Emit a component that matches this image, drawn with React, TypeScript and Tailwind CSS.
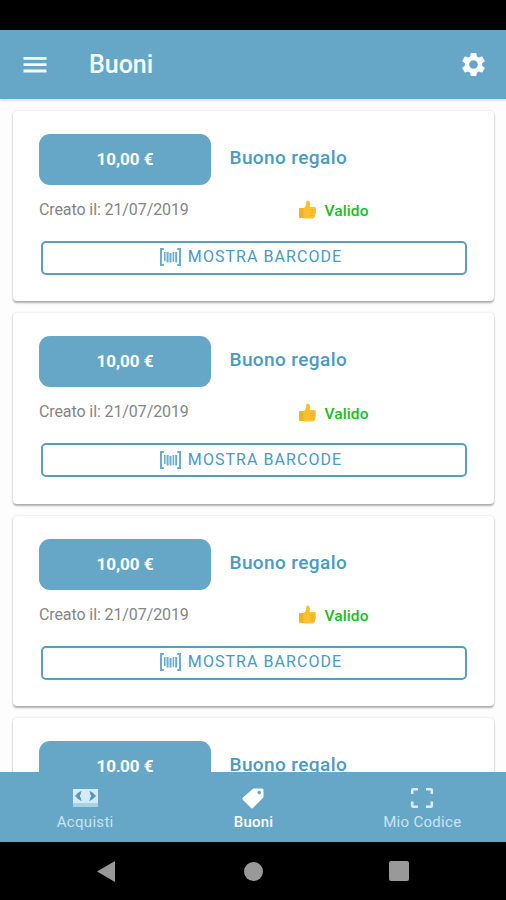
import React from 'react';
import { MdSettings } from 'react-icons/md';

interface Voucher {
  id: number;
  amount: string;
  title: string;
  createdAt: string;
  status: string;
}

const vouchers: Voucher[] = [
  { id: 1, amount: '10,00 €', title: 'Buono regalo', createdAt: '21/07/2019', status: 'Valido' },
  { id: 2, amount: '10,00 €', title: 'Buono regalo', createdAt: '21/07/2019', status: 'Valido' },
  { id: 3, amount: '10,00 €', title: 'Buono regalo', createdAt: '21/07/2019', status: 'Valido' },
  { id: 4, amount: '10,00 €', title: 'Buono regalo', createdAt: '21/07/2019', status: 'Valido' },
];

const MenuIcon = () => (
  <svg width="24" height="18" viewBox="0 0 24 18" fill="#f4fbff">
    <path d="M.5 1h23v2.8H.5zM.5 7.3h23v2.8H.5zM.5 13.6h23v2.8H.5z" />
  </svg>
);

const BarcodeIcon = () => (
  <svg width="23" height="18" viewBox="0 0 23 18" fill="none" stroke="#6aaccd">
    <path d="M4.8 1H2v16h2.8M18.2 1H21v16h-2.8" strokeWidth="2" />
    <path d="M5.8 4v9M14.4 4v10" strokeWidth="1.6" />
    <path d="M8.6 4v10.5M11.5 5v9.5M17.2 4v10.5" strokeWidth="2" />
  </svg>
);

const ThumbIcon = () => (
  <svg className="mt-px" width="19" height="20" viewBox="0 0 19 20">
    <path
      d="M1 9.2Q1 8 2.2 8H5.6Q8.4 6.6 8.2 2.2Q8.3.4 9.8.6Q12.2 1 12 4.4L11.6 7H16.4Q18 7.2 17.9 8.7Q17.9 9.6 17.4 10Q18.4 11 17.6 12.5Q18.2 13.8 17.1 15Q17.6 16.4 16.3 17.4Q15.6 18.6 14 18.6H7.6Q6.2 18.6 5.2 17.9H2.2Q1 17.9 1 16.7Z"
      fill="#fbc02d"
    />
    <path d="M1 9.2Q1 8 2.2 8H5.3V17.9H2.2Q1 17.9 1 16.7Z" fill="#f9b020" />
    <path d="M12 10.2h5.2M12 12.8h5.4M12 15.4h4.8" stroke="#f3a81c" strokeWidth=".7" />
  </svg>
);

const CashIcon = () => (
  <svg width="25" height="18" viewBox="0 0 25 18">
    <path d="M0 0h25v14H0z" fill="#d6eaf4" />
    <path d="M0 14h25v4H0z" fill="#a9d0e3" />
    <path
      d="M8.6 1.8Q6.4 7.2 8.9 12.2Q5.4 11 2 7Q5 3 8.6 1.8ZM16.4 1.8Q18.6 7.2 16.1 12.2Q19.6 11 23 7Q20 3 16.4 1.8Z"
      fill="#5598bb"
    />
    <path d="M8 5.2Q5.6 7 8 8.8ZM17 5.2Q19.4 7 17 8.8Z" fill="#d6eaf4" />
  </svg>
);

const TagIcon = () => (
  <svg width="22" height="21" viewBox="0 0 22 21">
    <path
      d="M12.2.6 20 .4Q21.5.4 21.5 2V8.2Q21.5 9.2 20.8 10L11.2 19.8Q10 21 8.8 19.8L1 12Q-.1 10.8 1 9.6L10.1 1.5Q11 .6 12.2.6Z"
      fill="#fff"
    />
    <circle cx="17.2" cy="4.6" r="1.8" fill="#66a7c8" />
  </svg>
);

const ScanIcon = () => (
  <svg width="24" height="22" viewBox="0 0 24 22" fill="none" stroke="#d9edf6" strokeWidth="2.5">
    <path d="M2.2 7V3.2Q2.2 2.2 3.2 2.2H8M16 2.2h4.8q1 0 1 1V7M21.8 14.5v4.3q0 1-1 1H16M8 19.8H3.2q-1 0-1-1v-4.3" />
  </svg>
);

const VoucherCard: React.FC<{ voucher: Voucher }> = ({ voucher }) => (
  <div className="h-[190.5px] shrink-0 rounded bg-white px-[26.5px] pt-[23px] shadow-[0_1.5px_2px_rgba(0,0,0,0.3),0_0_3px_rgba(0,0,0,0.07)]">
    <div className="flex h-[51px]">
      <div className="flex w-[172px] items-center justify-center rounded-[11px] bg-[#66a7c8] pt-px text-[17px] font-bold text-white">
        {voucher.amount}
      </div>
      <h2 className="mt-3 ml-[18.5px] text-[19px] leading-6 font-medium tracking-[0.4px] text-[#4b9ac2]">
        {voucher.title}
      </h2>
    </div>
    <div className="mt-[13px] flex h-6 items-center">
      <span className="w-[258.5px] text-base tracking-[-0.1px] text-[#858585]">
        Creato il: {voucher.createdAt}
      </span>
      <ThumbIcon />
      <span className="mt-[5px] ml-2 text-[15.5px] font-medium tracking-[0.1px] text-[#18bd22]">
        {voucher.status}
      </span>
    </div>
    <button className="mt-[19px] ml-0.5 flex h-[34px] w-[426px] items-center justify-center gap-1.5 rounded-[5px] border-2 border-[#559fc4] pr-[7px] pb-px text-base tracking-[1.05px] text-[#4b9ac2]">
      <BarcodeIcon />
      MOSTRA BARCODE
    </button>
  </div>
);

const App: React.FC = () => {
  return (
    <div className="flex h-[900px] w-[506px] flex-col overflow-hidden bg-[#fdfdfd] font-['Roboto','Noto_Sans',sans-serif]">
      <div className="h-[30px] shrink-0 bg-black" />

      <header className="z-10 flex h-[69px] shrink-0 items-center bg-[#66a7c8] pr-[18.5px] pl-[23px] shadow-[0_1px_3px_rgba(0,0,0,0.2)]">
        <MenuIcon />
        <h1 className="ml-[42px] text-[25px] font-medium text-[#f6fcff]">Buoni</h1>
        <MdSettings className="ml-auto" size={29} color="#fff" />
      </header>

      <main className="flex min-h-0 flex-1 flex-col gap-3 overflow-hidden px-[12.5px] pt-[11.5px]">
        {vouchers.map((voucher) => (
          <VoucherCard key={voucher.id} voucher={voucher} />
        ))}
      </main>

      <nav className="grid h-[70px] shrink-0 grid-cols-3 bg-[#66a7c8] pl-px text-[15px] text-[#c9e3f0]">
        <div className="flex flex-col items-center pt-[15px]">
          <div className="flex h-[22px] items-center">
            <CashIcon />
          </div>
          <span className="mt-[3px] leading-5 tracking-[0.3px]">Acquisti</span>
        </div>
        <div className="flex flex-col items-center pt-[15px]">
          <div className="flex h-[22px] items-center">
            <TagIcon />
          </div>
          <span className="mt-[3px] leading-5 font-medium tracking-[0.2px] text-white">Buoni</span>
        </div>
        <div className="flex flex-col items-center pt-[15px] pl-px">
          <div className="flex h-[22px] items-center">
            <ScanIcon />
          </div>
          <span className="mt-[3px] leading-5 tracking-[0.3px]">Mio Codice</span>
        </div>
      </nav>

      <div className="flex h-[58px] shrink-0 items-center bg-black pl-[97px]">
        <svg width="18" height="21" viewBox="0 0 18 21">
          <path d="M0 10.5 18 0v21z" fill="#999" />
        </svg>
        <div className="ml-[129px] size-[19px] rounded-full bg-[#999]" />
        <div className="ml-[126px] size-5 rounded-xs bg-[#999]" />
      </div>
    </div>
  );
};

export default App;
